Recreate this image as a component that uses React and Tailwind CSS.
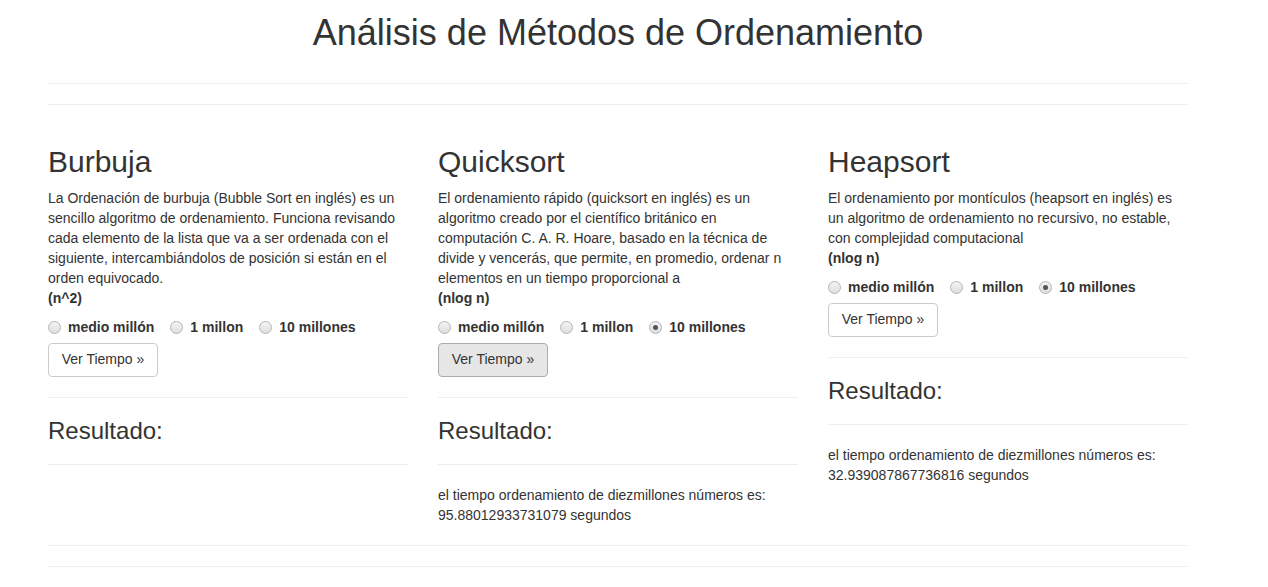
import React from 'react';

const methods = [
  {
    name: 'Burbuja',
    text: 'La Ordenación de burbuja (Bubble Sort en inglés) es un sencillo algoritmo de ordenamiento. Funciona revisando cada elemento de la lista que va a ser ordenada con el siguiente, intercambiándolos de posición si están en el orden equivocado.',
    order: '(n^2)',
    checked: null,
    active: false,
    result: null,
  },
  {
    name: 'Quicksort',
    text: 'El ordenamiento rápido (quicksort en inglés) es un algoritmo creado por el científico británico en computación C. A. R. Hoare, basado en la técnica de divide y vencerás, que permite, en promedio, ordenar n elementos en un tiempo proporcional a',
    order: '(nlog n)',
    checked: 2,
    active: true,
    result: ['el tiempo ordenamiento de diezmillones números es:', '95.88012933731079 segundos'],
  },
  {
    name: 'Heapsort',
    text: 'El ordenamiento por montículos (heapsort en inglés) es un algoritmo de ordenamiento no recursivo, no estable, con complejidad computacional',
    order: '(nlog n)',
    checked: 2,
    active: false,
    result: ['el tiempo ordenamiento de diezmillones números es:', '32.939087867736816 segundos'],
  },
];

const options = ['medio millón', '1 millon', '10 millones'];

const Radio = ({ checked }) => (
  <span className="w-[13px] h-[13px] rounded-full border border-[#b4b4b4] bg-gradient-to-b from-[#f4f4f4] to-[#dedede] flex items-center justify-center shrink-0">
    {checked && <span className="w-[5px] h-[5px] rounded-full bg-[#555]" />}
  </span>
);

const Method = ({ m }) => (
  <div className="w-[360px]">
    <h2 className="text-[30px] leading-[33px] font-normal mb-[10px]">{m.name}</h2>
    <p className="text-[14px] leading-[20px] mb-[10px]">
      {m.text}
      <br />
      <b>{m.order}</b>
    </p>
    <div className="flex items-center h-[20px] mt-px">
      {options.map((o, i) => (
        <label key={o} className={`flex items-center gap-[7px] font-bold text-[14px] ${i > 0 ? 'ml-[16px]' : ''}`}>
          <Radio checked={m.checked === i} />
          {o}
        </label>
      ))}
    </div>
    <button
      className={`mt-[5px] h-[34px] w-[110px] rounded-[4px] border text-[14px] text-[#333] ${
        m.active ? 'bg-[#e6e6e6] border-[#adadad]' : 'bg-white border-[#ccc]'
      }`}
    >
      Ver Tiempo »
    </button>
    <hr className="my-5 border-t border-[#eee]" />
    <h3 className="text-[24px] leading-[26.4px] font-normal mb-[10px]">Resultado:</h3>
    <hr className="mt-5 border-t border-[#eee]" />
    {m.result && (
      <p className="mt-5 text-[14px] leading-[20px]">
        {m.result[0]}
        <br />
        {m.result[1]}
      </p>
    )}
  </div>
);

export default function App() {
  return (
    <div className="w-[1236px] px-12 bg-white text-[#333] font-['Liberation_Sans',Arial,sans-serif]">
      <h1 className="pt-[13px] text-[36px] leading-[39.6px] font-normal text-center">
        Análisis de Métodos de Ordenamiento
      </h1>
      <hr className="mt-[30px] border-t border-[#eee]" />
      <hr className="mt-5 border-t border-[#eee]" />
      <div className="pt-10 flex gap-[30px] items-start">
        {methods.map((m) => (
          <Method key={m.name} m={m} />
        ))}
      </div>
      <hr className="mt-5 border-t border-[#eee]" />
      <hr className="mt-5 mb-5 border-t border-[#eee]" />
    </div>
  );
}
